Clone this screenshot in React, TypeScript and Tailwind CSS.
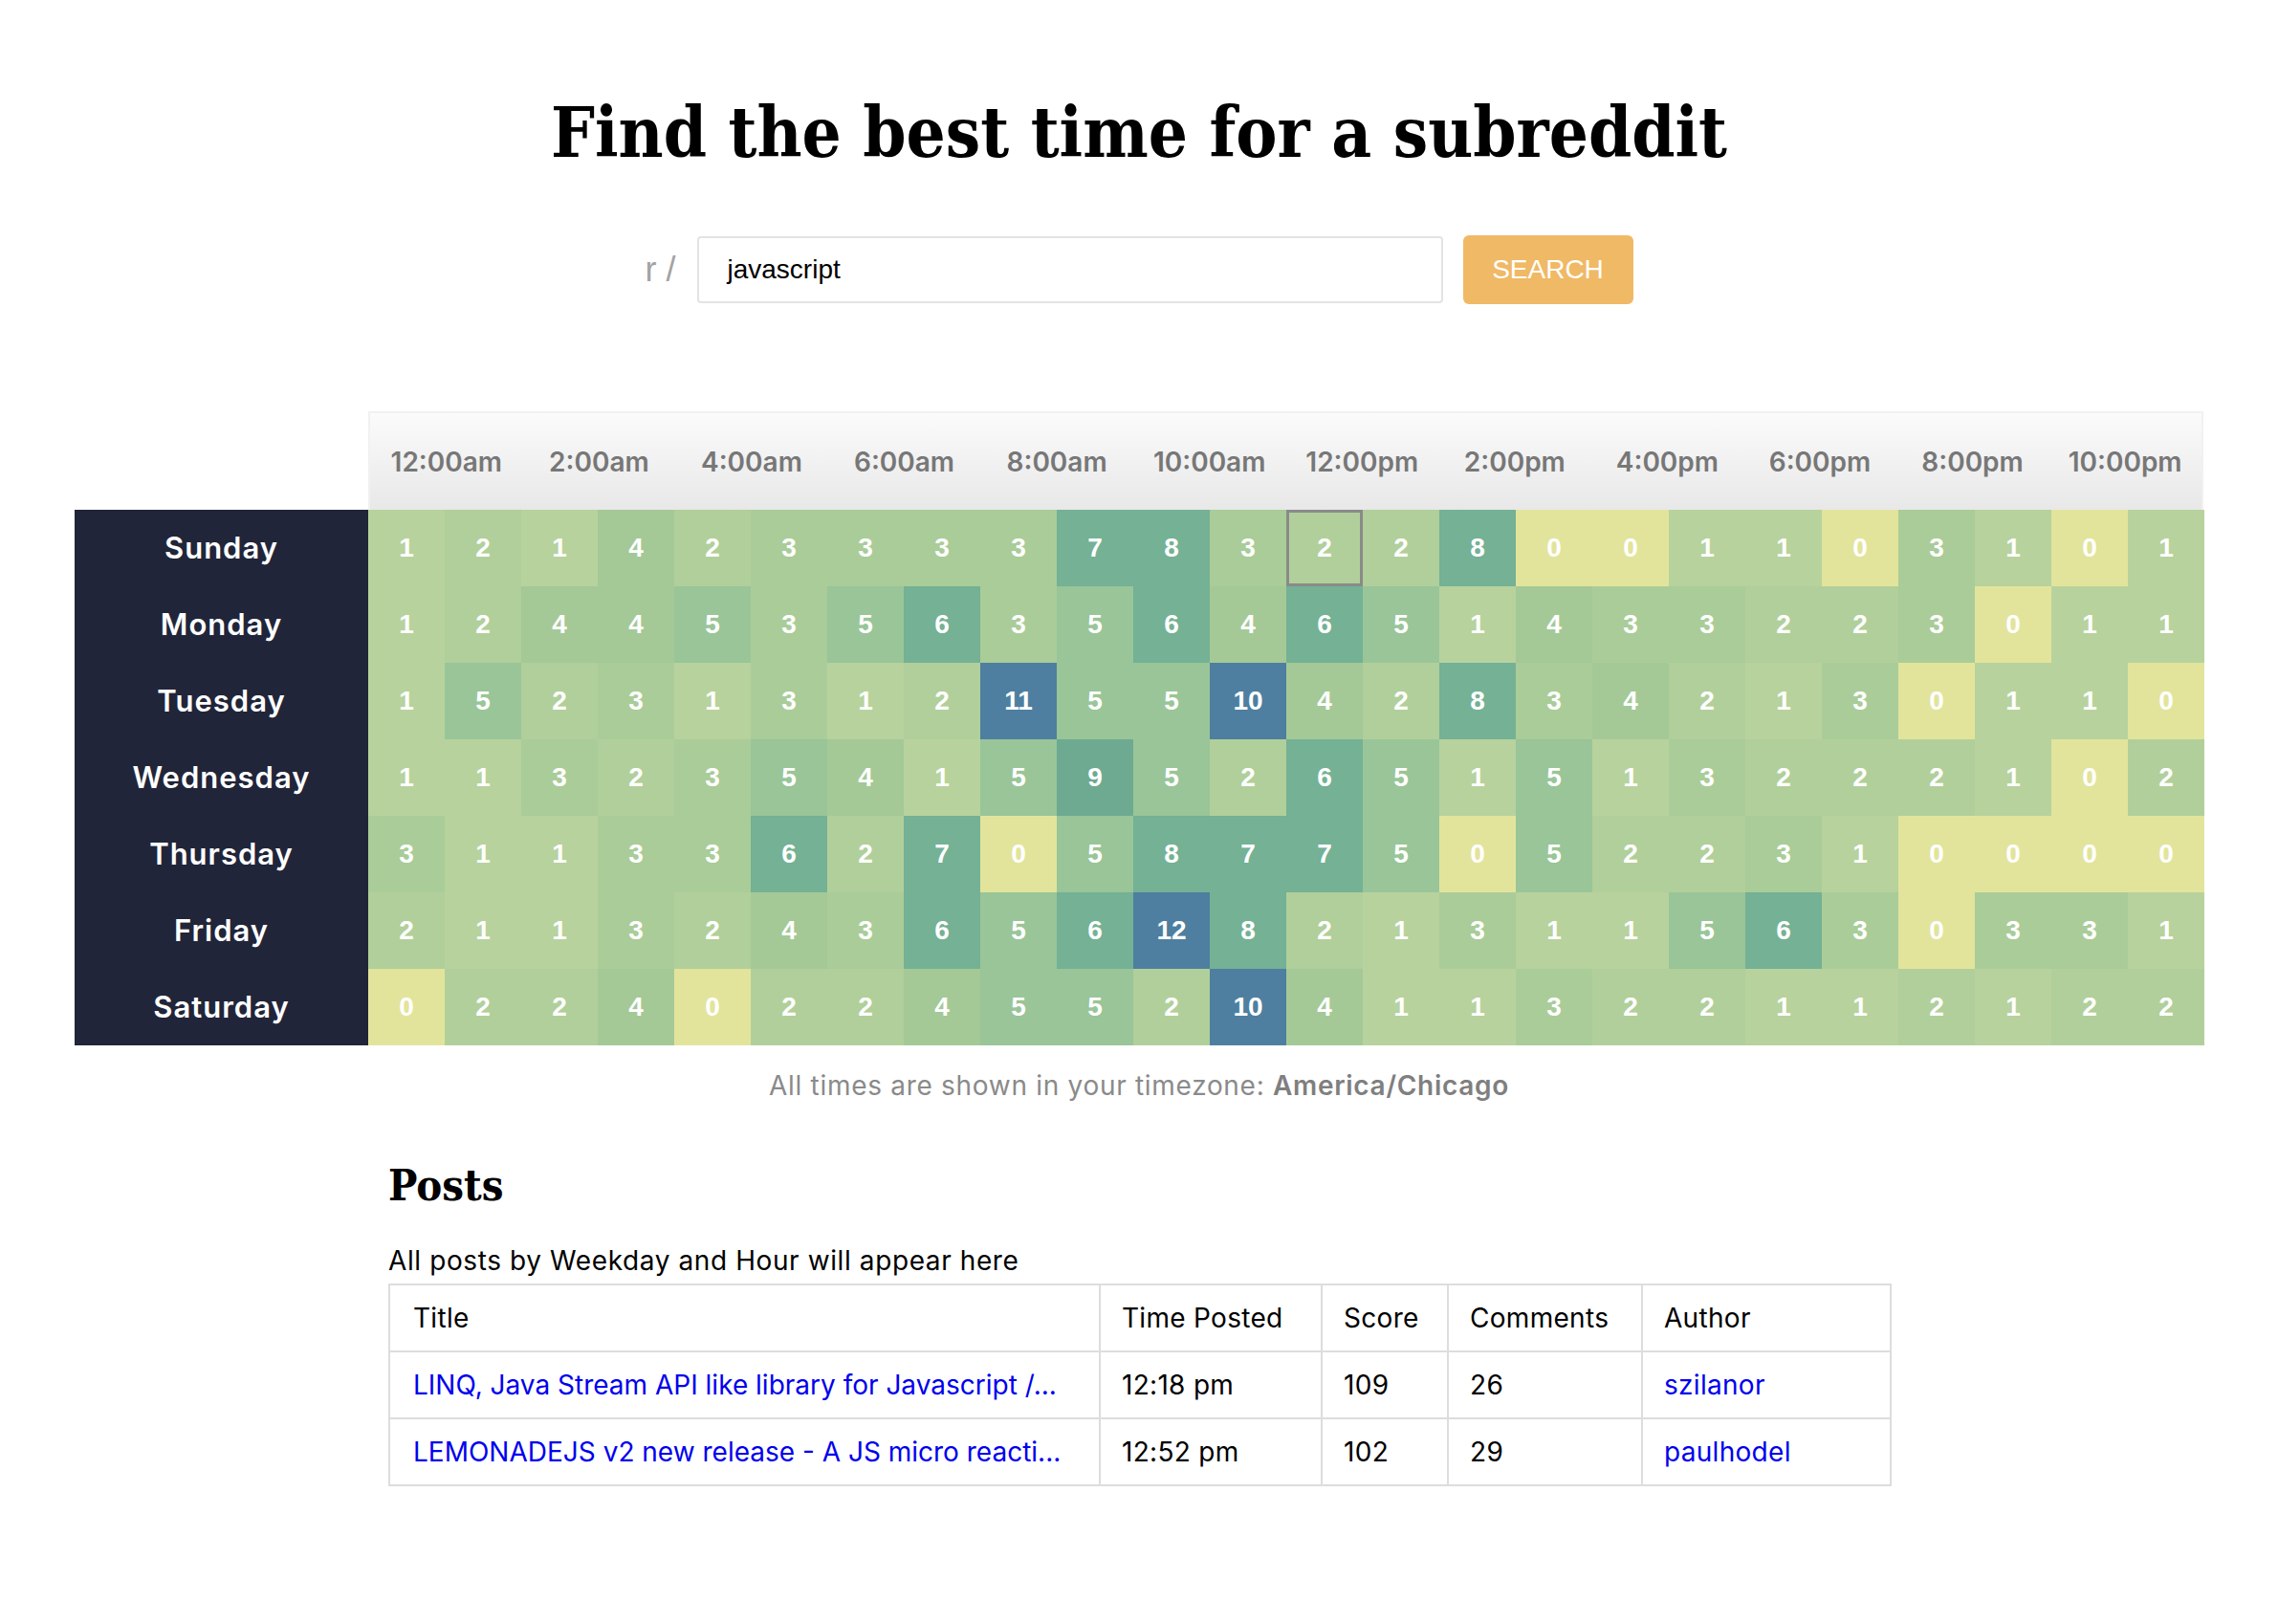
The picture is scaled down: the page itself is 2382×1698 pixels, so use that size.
const days = ["Sunday", "Monday", "Tuesday", "Wednesday", "Thursday", "Friday", "Saturday"];

const hours = [
  "12:00am", "2:00am", "4:00am", "6:00am", "8:00am", "10:00am",
  "12:00pm", "2:00pm", "4:00pm", "6:00pm", "8:00pm", "10:00pm",
];

const grid: number[][] = [
  [1, 2, 1, 4, 2, 3, 3, 3, 3, 7, 8, 3, 2, 2, 8, 0, 0, 1, 1, 0, 3, 1, 0, 1],
  [1, 2, 4, 4, 5, 3, 5, 6, 3, 5, 6, 4, 6, 5, 1, 4, 3, 3, 2, 2, 3, 0, 1, 1],
  [1, 5, 2, 3, 1, 3, 1, 2, 11, 5, 5, 10, 4, 2, 8, 3, 4, 2, 1, 3, 0, 1, 1, 0],
  [1, 1, 3, 2, 3, 5, 4, 1, 5, 9, 5, 2, 6, 5, 1, 5, 1, 3, 2, 2, 2, 1, 0, 2],
  [3, 1, 1, 3, 3, 6, 2, 7, 0, 5, 8, 7, 7, 5, 0, 5, 2, 2, 3, 1, 0, 0, 0, 0],
  [2, 1, 1, 3, 2, 4, 3, 6, 5, 6, 12, 8, 2, 1, 3, 1, 1, 5, 6, 3, 0, 3, 3, 1],
  [0, 2, 2, 4, 0, 2, 2, 4, 5, 5, 2, 10, 4, 1, 1, 3, 2, 2, 1, 1, 2, 1, 2, 2],
];

// colour scale, yellow -> green -> blue
const cellBg = (v: number) => {
  if (v === 0) return "bg-[#e2e49c]";
  if (v === 1) return "bg-[#b7d29d]";
  if (v === 2) return "bg-[#b1cf9a]";
  if (v === 3) return "bg-[#aacc98]";
  if (v === 4) return "bg-[#a4c996]";
  if (v === 5) return "bg-[#99c598]";
  if (v <= 8) return "bg-[#74b195]";
  if (v === 9) return "bg-[#6eaa91]";
  return "bg-[#4e7fa0]";
};

const posts = [
  {
    title: "LINQ, Java Stream API like library for Javascript /...",
    time: "12:18 pm",
    score: 109,
    comments: 26,
    author: "szilanor",
  },
  {
    title: "LEMONADEJS v2 new release - A JS micro reacti...",
    time: "12:52 pm",
    score: 102,
    comments: 29,
    author: "paulhodel",
  },
];

const Heatmap = () => {
  return (
    <div className="mx-[78px] mt-[112px]">
      {/* Hour labels */}
      <div className="flex">
        <div className="w-[307px] shrink-0"></div>
        <div className="flex w-[1920px] h-[103px] items-center border-2 border-b-0 border-[#f1f1f1] bg-linear-to-b from-[#fbfbfb] to-[#e8e8e8]">
          {hours.map((h) => (
            <div
              key={h}
              className="flex-1 text-center text-[28px] font-semibold text-[#777777] font-['Inter','Open_Sans',sans-serif]"
            >
              {h}
            </div>
          ))}
        </div>
      </div>

      {/* Rows */}
      {days.map((day, r) => (
        <div key={day} className="flex h-[80px]">
          <div className="w-[307px] shrink-0 flex items-center justify-center bg-[#212539] text-white text-[31px] font-semibold tracking-[1px] font-['Inter','Open_Sans',sans-serif]">
            {day}
          </div>
          {grid[r].map((v, c) => (
            <div
              key={c}
              className={`w-[80px] h-[80px] shrink-0 flex items-center justify-center text-white text-[28px] font-bold font-['Liberation_Sans',Arial,sans-serif] ${cellBg(v)} ${
                r === 0 && c === 12 ? "border-[3px] border-[#8a8a8a]" : ""
              }`}
            >
              {v}
            </div>
          ))}
        </div>
      ))}
    </div>
  );
};

const PostsTable = () => {
  return (
    <div className="w-[1570px] mx-auto mt-[68px] font-['Inter','Open_Sans',sans-serif]">
      <h2 className="text-[45px] leading-none font-bold text-black font-['DejaVu_Serif_Condensed','DejaVu_Serif',serif] [font-stretch:condensed]">
        Posts
      </h2>
      <p className="mt-[42px] text-[28px] leading-none tracking-[0.6px] text-black">
        All posts by Weekday and Hour will appear here
      </p>
      <table className="mt-[10px] w-[1570px] table-fixed border-collapse border-2 border-[#dddddd] text-[28px] tracking-[0.3px] text-black">
        <colgroup>
          <col className="w-[743px]" />
          <col className="w-[232px]" />
          <col className="w-[132px]" />
          <col className="w-[203px]" />
          <col className="w-[260px]" />
        </colgroup>
        <thead>
          <tr className="h-[70px]">
            <th className="border-2 border-[#dddddd] px-[24px] text-left font-normal">Title</th>
            <th className="border-2 border-[#dddddd] px-[22px] text-left font-normal">Time Posted</th>
            <th className="border-2 border-[#dddddd] px-[22px] text-left font-normal">Score</th>
            <th className="border-2 border-[#dddddd] px-[22px] text-left font-normal">Comments</th>
            <th className="border-2 border-[#dddddd] px-[22px] text-left font-normal">Author</th>
          </tr>
        </thead>
        <tbody>
          {posts.map((p) => (
            <tr key={p.author} className="h-[70px]">
              <td className="border-2 border-[#dddddd] px-[24px] whitespace-nowrap">
                <a href="#" className="text-[#0000ee] tracking-[0px]">
                  {p.title}
                </a>
              </td>
              <td className="border-2 border-[#dddddd] px-[22px]">{p.time}</td>
              <td className="border-2 border-[#dddddd] px-[22px]">{p.score}</td>
              <td className="border-2 border-[#dddddd] px-[22px]">{p.comments}</td>
              <td className="border-2 border-[#dddddd] px-[22px]">
                <a href="#" className="text-[#0000ee]">
                  {p.author}
                </a>
              </td>
            </tr>
          ))}
        </tbody>
      </table>
    </div>
  );
};

export default function App() {
  return (
    <div className="min-h-screen bg-white pb-[140px]">
      <h1 className="pt-[103px] text-center text-[72px] leading-none font-bold text-black font-['DejaVu_Serif_Condensed','DejaVu_Serif',serif] [font-stretch:condensed]">
        Find the best time for a subreddit
      </h1>

      {/* Search */}
      <div className="mt-[71px] flex items-center justify-center">
        <span className="mr-[22px] text-[36px] text-[#a3a3a3] font-['Liberation_Sans',Arial,sans-serif]">r /</span>
        <div className="w-[780px] h-[70px] flex items-center rounded-[4px] border-2 border-[#e3e3e3] px-[30px] text-[28px] text-black font-['Liberation_Sans',Arial,sans-serif]">
          javascript
        </div>
        <button className="ml-[21px] w-[178px] h-[72px] rounded-[6px] bg-[#f0b966] text-white text-[28px] font-['Liberation_Sans',Arial,sans-serif]">
          SEARCH
        </button>
      </div>

      <Heatmap />

      <p className="mt-[28px] text-center text-[28px] leading-none tracking-[0.7px] text-[#8a8a8a] font-['Inter','Open_Sans',sans-serif]">
        All times are shown in your timezone: <span className="font-semibold text-[#7f7f7f]">America/Chicago</span>
      </p>

      <PostsTable />
    </div>
  );
}
